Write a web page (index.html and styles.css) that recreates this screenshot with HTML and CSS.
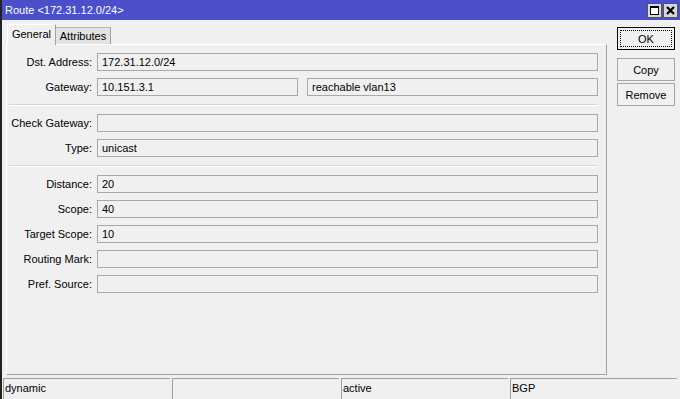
FILE: index.html
```html
<!DOCTYPE html>
<html lang="en">
    <head>
        <meta charset="UTF-8" />
        <title>Route &lt;172.31.12.0/24&gt;</title>
        <link rel="stylesheet" href="styles.css">
    </head>
    <body>
        <div class="window">
            <div class="titlebar">
                <span class="title">Route &lt;172.31.12.0/24&gt;</span>
                <div class="title-buttons">
                    <span class="tb-btn">
                        <svg width="11" height="11" viewBox="0 0 11 11">
                            <rect x="1.5" y="1.5" width="8" height="8" fill="#fff" stroke="#000" />
                            <rect x="1" y="1" width="9" height="2" fill="#000" />
                        </svg>
                    </span>
                    <span class="tb-btn">
                        <svg width="11" height="11" viewBox="0 0 11 11">
                            <path d="M2 2 L9 9 M9 2 L2 9" stroke="#000" stroke-width="2.2" />
                        </svg>
                    </span>
                </div>
            </div>

            <div class="main">
                <div class="tabs-area">
                    <div class="tab-strip">
                        <div class="tab active">General</div>
                        <div class="tab">Attributes</div>
                    </div>
                    <div class="panel">
                        <div class="group">
                            <div class="row">
                                <label>Dst. Address:</label>
                                <div class="field">172.31.12.0/24</div>
                            </div>
                            <div class="row">
                                <label>Gateway:</label>
                                <div class="field-pair">
                                    <div class="field">10.151.3.1</div>
                                    <div class="field">reachable vlan13</div>
                                </div>
                            </div>
                        </div>
                        <div class="sep"></div>
                        <div class="group">
                            <div class="row">
                                <label>Check Gateway:</label>
                                <div class="field"></div>
                            </div>
                            <div class="row">
                                <label>Type:</label>
                                <div class="field">unicast</div>
                            </div>
                        </div>
                        <div class="sep"></div>
                        <div class="group">
                            <div class="row">
                                <label>Distance:</label>
                                <div class="field">20</div>
                            </div>
                            <div class="row">
                                <label>Scope:</label>
                                <div class="field">40</div>
                            </div>
                            <div class="row">
                                <label>Target Scope:</label>
                                <div class="field">10</div>
                            </div>
                            <div class="row">
                                <label>Routing Mark:</label>
                                <div class="field"></div>
                            </div>
                            <div class="row">
                                <label>Pref. Source:</label>
                                <div class="field"></div>
                            </div>
                        </div>
                    </div>
                </div>

                <div class="actions">
                    <button class="btn default"><span class="focus">OK</span></button>
                    <button class="btn copy">Copy</button>
                    <button class="btn">Remove</button>
                </div>
            </div>

            <div class="statusbar">
                <div class="cell">dynamic</div>
                <div class="cell"></div>
                <div class="cell">active</div>
                <div class="cell">BGP</div>
            </div>
        </div>
    </body>
</html>
```

FILE: styles.css
```css
html,
body {
    margin: 0;
    padding: 0;
}
body {
    font-family: "Liberation Sans", Arial, sans-serif;
    font-size: 11px;
    color: #000;
    background: #f0f0f0;
}
.window {
    width: 678px;
    height: 399px;
    border-left: 2px solid #222;
    display: flex;
    flex-direction: column;
    background: #f0f0f0;
    overflow: hidden;
}
.titlebar {
    height: 20px;
    background: #4b4fc9;
    color: #fff;
    display: flex;
    align-items: center;
    justify-content: space-between;
    padding-left: 3px;
    flex-shrink: 0;
}
.title {
    font-size: 11px;
    line-height: 20px;
}
.title-buttons {
    display: flex;
    gap: 1px;
    padding-right: 2px;
}
.tb-btn {
    width: 13px;
    height: 13px;
    background: #d8d8d8;
    border: 1px solid #555;
    display: flex;
    align-items: center;
    justify-content: center;
}
.main {
    flex: 1;
    display: flex;
}
.tabs-area {
    width: 605px;
    padding: 4px 0 2px 4px;
    box-sizing: border-box;
    display: flex;
    flex-direction: column;
}
.tab-strip {
    display: flex;
    align-items: flex-end;
    height: 20px;
    padding-left: 1px;
}
.tab {
    box-sizing: border-box;
    height: 17px;
    width: 55px;
    text-align: center;
    line-height: 16px;
    background: #e3e3e3;
    border-top: 1px solid #b5b5b5;
    border-right: 1px solid #a0a0a0;
}
.tab.active {
    height: 21px;
    width: 49px;
    margin-bottom: -1px;
    line-height: 18px;
    background: #f0f0f0;
    border-top: 1px solid #fff;
    border-left: 1px solid #fff;
    border-right: 1px solid #a0a0a0;
    position: relative;
    z-index: 1;
}
.panel {
    flex: 1;
    box-sizing: border-box;
    width: 601px;
    border-top: 1px solid #fff;
    border-left: 1px solid #fff;
    border-right: 1px solid #a0a0a0;
    border-bottom: 1px solid #a0a0a0;
    padding: 8px 8px 0 0;
    display: flex;
    flex-direction: column;
}
.group {
    display: flex;
    flex-direction: column;
    gap: 7px;
}
.row {
    display: grid;
    grid-template-columns: 86px 1fr;
    column-gap: 4px;
    align-items: center;
}
.row label {
    text-align: right;
    padding-right: 1px;
}
.field {
    box-sizing: border-box;
    height: 18px;
    border: 1px solid #a8a8a8;
    background: #f0f0f0;
    padding-left: 4px;
    line-height: 16px;
    white-space: nowrap;
}
.field-pair {
    display: grid;
    grid-template-columns: 201px 1fr;
    column-gap: 9px;
}
.sep {
    margin: 8px 0 8px 2px;
    height: 1px;
    background: #d7d7d7;
    border-bottom: 1px solid #fff;
}
.actions {
    flex: 1;
    padding: 7px 0 0 10px;
    display: flex;
    flex-direction: column;
    gap: 2px;
}
.btn {
    width: 58px;
    height: 23px;
    box-sizing: border-box;
    font-family: "Liberation Sans", Arial, sans-serif;
    font-size: 11px;
    color: #000;
    background: #f0f0f0;
    border: 1px solid #a5a5a5;
    padding: 0;
    display: flex;
    align-items: center;
    justify-content: center;
}
.btn.default {
    border: 1px solid #000;
    padding: 2px;
}
.focus {
    flex: 1;
    align-self: stretch;
    border: 1px dotted #000;
    display: flex;
    align-items: center;
    justify-content: center;
}
.btn.copy {
    margin-top: 6px;
}
.statusbar {
    height: 22px;
    flex-shrink: 0;
    padding: 1px 0 0 1px;
    box-sizing: border-box;
    display: grid;
    grid-template-columns: repeat(4, 167px);
    column-gap: 2px;
}
.cell {
    border-top: 1px solid #a0a0a0;
    border-left: 1px solid #a0a0a0;
    padding-left: 1px;
    line-height: 19px;
}
```
